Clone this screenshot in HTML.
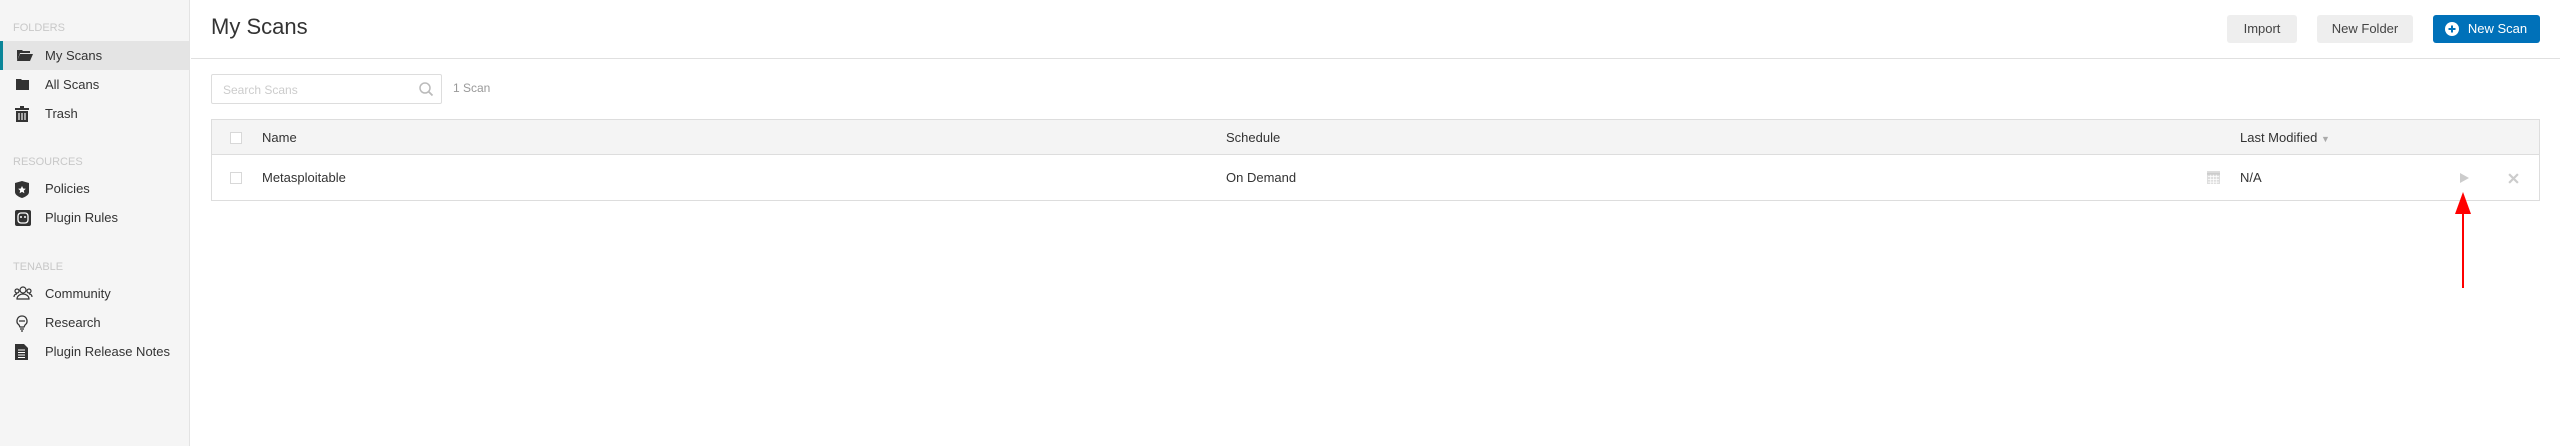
<!DOCTYPE html>
<html><head><meta charset="utf-8"><style>
*{margin:0;padding:0;box-sizing:border-box}
body{width:2560px;height:446px;overflow:hidden;background:#fff;font-family:"Liberation Sans",sans-serif;color:#333;position:relative}
.sb{position:absolute;left:0;top:0;width:190px;height:446px;background:#f5f5f5;border-right:1px solid #e3e3e3}
.lbl{position:absolute;left:13px;font-size:11px;color:#c8c8c8}
.it{position:absolute;left:0;width:189px;height:29px;font-size:13px;line-height:29px;padding-left:45px;color:#333}
.it.act{background:#e4e4e4;border-left:3px solid #0a8598;padding-left:42px}
.it svg{position:absolute;left:15px;top:7px}
.abs{position:absolute}
.btn{position:absolute;top:15px;height:28px;border-radius:3px;background:#eee;font-size:13px;line-height:28px;text-align:center;color:#444}
.cb{position:absolute;width:12px;height:12px;border:1px solid #d8d8d8;background:#fff}
.t{font-size:13px}
</style></head><body>
<div class="sb">
<div class="lbl" style="top:22px">FOLDERS</div>
<div class="it act" style="top:41px"><svg style="left:13px" width="18" height="14" viewBox="0 0 18 14"><path d="M1 2h5l1 1h7v2H4L1 13z" fill="#333"/><path d="M4 6h13l-3 7H1z" fill="#333"/></svg>My Scans</div>
<div class="it" style="top:70px"><svg width="15" height="14" viewBox="0 0 15 14"><path d="M1 2h5l1 1h7v10H1z" fill="#333"/></svg>All Scans</div>
<div class="it" style="top:99px"><svg width="14" height="16" viewBox="0 0 14 16"><path d="M5 0h4v2h5v2H0V2h5z M1 5h12v11H1z" fill="#333"/><path d="M4 7v7M7 7v7M10 7v7" stroke="#f5f5f5" stroke-width="1.2"/></svg>Trash</div>
<div class="lbl" style="top:156px">RESOURCES</div>
<div class="it" style="top:174px"><svg width="14" height="17" viewBox="0 0 14 17"><path d="M7 0l7 2v9c0 3-4 5-7 6-3-1-7-3-7-6V2z" fill="#333"/><path d="M7 5l1.2 2.5 2.6.3-2 1.8.6 2.6L7 10.9 4.6 12.2l.6-2.6-2-1.8 2.6-.3z" fill="#fff"/></svg>Policies</div>
<div class="it" style="top:203px"><svg width="16" height="16" viewBox="0 0 16 16"><rect x="0" y="0" width="16" height="16" rx="2" fill="#333"/><rect x="3" y="3" width="10" height="10" rx="3" fill="none" stroke="#fff" stroke-width="1.3"/><circle cx="6" cy="7" r="1" fill="#fff"/><circle cx="10" cy="7" r="1" fill="#fff"/></svg>Plugin Rules</div>
<div class="lbl" style="top:261px">TENABLE</div>
<div class="it" style="top:279px"><svg style="left:13px" width="20" height="14" viewBox="0 0 20 14"><g fill="none" stroke="#333" stroke-width="1.2"><circle cx="10" cy="4" r="3"/><path d="M4 13c0-3 3-5 6-5s6 2 6 5z"/><circle cx="4" cy="5" r="2"/><circle cx="16" cy="5" r="2"/><path d="M1 11c0-2 1-3 3-3M19 11c0-2-1-3-3-3"/></g></svg>Community</div>
<div class="it" style="top:308px"><svg width="14" height="17" viewBox="0 0 14 17"><g fill="none" stroke="#333" stroke-width="1.3"><path d="M7 1a5 5 0 0 0-3 9l1 2h4l1-2a5 5 0 0 0-3-9z"/><path d="M5 14h4M6 16h2M4 6h6"/></g></svg>Research</div>
<div class="it" style="top:337px"><svg width="13" height="16" viewBox="0 0 13 16"><path d="M0 0h9l4 4v12H0z" fill="#333"/><path d="M3 6h7M3 8.5h7M3 11h7M3 13.5h7" stroke="#fff" stroke-width="1"/></svg>Plugin Release Notes</div>
</div>
<div class="abs" style="left:211px;top:14px;font-size:22px;color:#333">My Scans</div>
<div class="abs" style="left:191px;top:58px;width:2369px;height:1px;background:#e0e0e0"></div>
<div class="btn" style="left:2227px;width:70px">Import</div>
<div class="btn" style="left:2317px;width:96px">New Folder</div>
<div class="btn" style="left:2433px;width:107px;background:#0071b9;color:#fff;padding-left:22px">New Scan
<svg class="abs" style="left:12px;top:7px" width="14" height="14" viewBox="0 0 14 14"><circle cx="7" cy="7" r="7" fill="#fff"/><path d="M7 3.5v7M3.5 7h7" stroke="#0071b9" stroke-width="2"/></svg></div>
<div class="abs" style="left:211px;top:74px;width:231px;height:30px;border:1px solid #ddd;border-radius:2px;font-size:12px;color:#ccc;padding:8px 0 0 11px">Search Scans
<svg class="abs" style="left:207px;top:7px" width="15" height="15" viewBox="0 0 15 15"><circle cx="6" cy="6" r="5" fill="none" stroke="#bbb" stroke-width="1.5"/><path d="M9.5 9.5l4 4" stroke="#bbb" stroke-width="1.8"/></svg></div>
<div class="abs" style="left:453px;top:81px;font-size:12px;color:#999">1 Scan</div>
<div class="abs" style="left:211px;top:119px;width:2329px;height:82px;border:1px solid #ddd">
<div class="abs" style="left:0;top:0;width:2327px;height:35px;background:#f4f4f4;border-bottom:1px solid #ddd"></div>
<div class="cb" style="left:18px;top:12px"></div>
<div class="cb" style="left:18px;top:52px"></div>
<div class="abs t" style="left:50px;top:10px">Name</div>
<div class="abs t" style="left:1014px;top:10px">Schedule</div>
<div class="abs t" style="left:2028px;top:10px">Last Modified <span style="color:#aaa;font-size:9px">▼</span></div>
<div class="abs t" style="left:50px;top:50px">Metasploitable</div>
<div class="abs t" style="left:1014px;top:50px">On Demand</div>
<div class="abs t" style="left:2028px;top:50px">N/A</div>
<svg class="abs" style="left:1995px;top:51px" width="13" height="13" viewBox="0 0 14 14"><rect width="14" height="14" fill="#ddd"/><path d="M0 3h14" stroke="#ccc" stroke-width="2"/><path d="M1 6h12M1 9h12M1 12h12M4 4v10M7 4v10M10 4v10" stroke="#fff" stroke-width=".8"/></svg>
<svg class="abs" style="left:2248px;top:53px" width="9" height="10" viewBox="0 0 9 10"><path d="M0 0l9 5-9 5z" fill="#ccc"/></svg>
<svg class="abs" style="left:2296px;top:53px" width="11" height="11" viewBox="0 0 10 10"><path d="M1 1l8 8M9 1l-8 8" stroke="#ccc" stroke-width="2"/></svg>
</div>
<svg class="abs" style="left:2454px;top:192px" width="18" height="98" viewBox="0 0 18 98"><path d="M9 0l8 22H1z" fill="#f00"/><path d="M9 20v76" stroke="#f00" stroke-width="2"/></svg>
</body></html>
